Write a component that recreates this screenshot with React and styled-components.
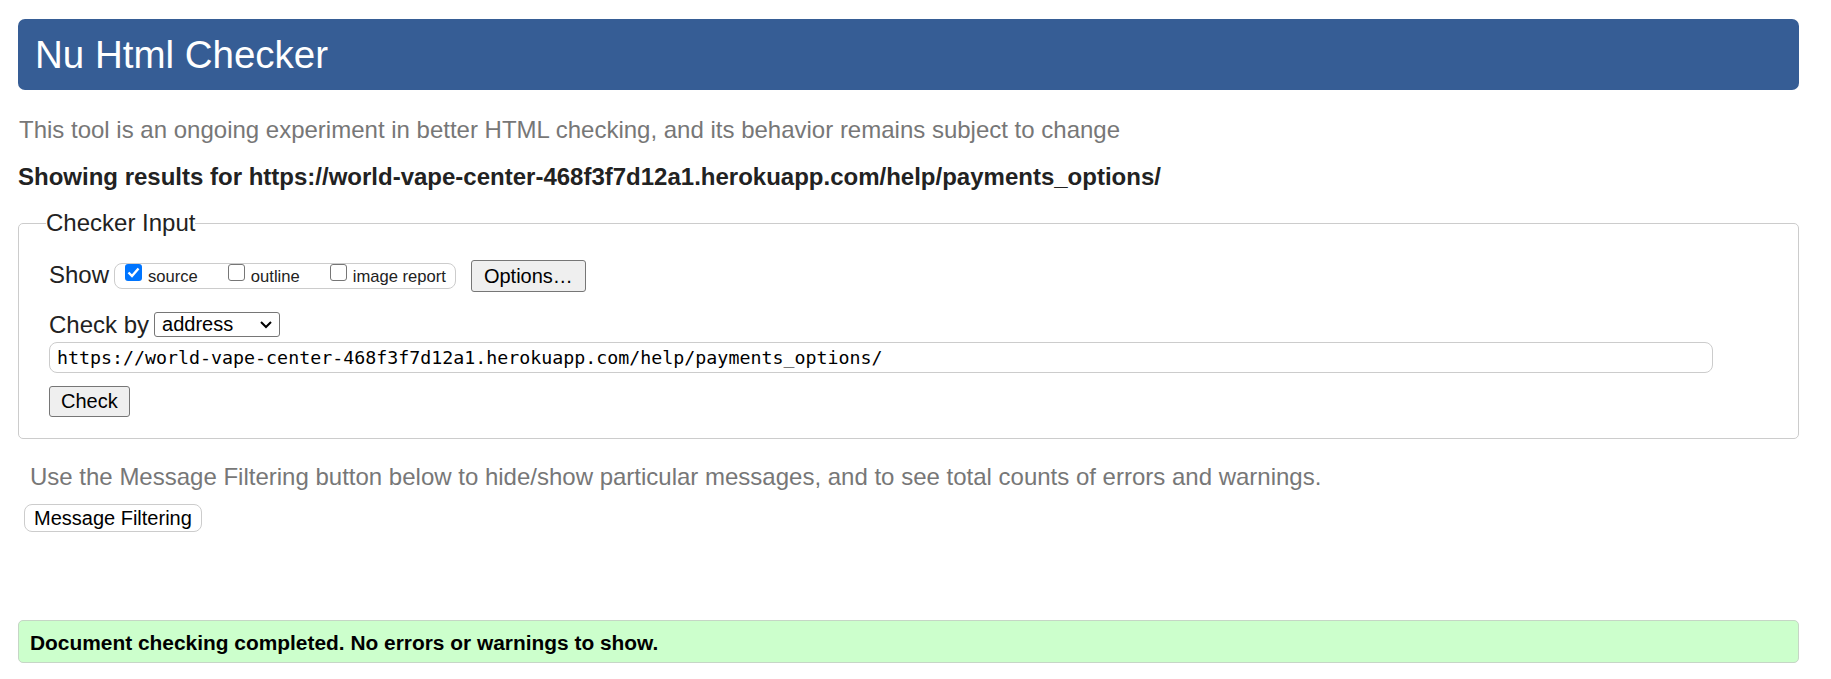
import React from 'react';
import styled, { createGlobalStyle } from 'styled-components';

const GlobalStyle = createGlobalStyle`
  body {
    margin: 0;
    background: #fff;
    font-family: "Liberation Sans", Arial, sans-serif;
    color: #222;
  }
`;

const Page = styled.div`
  padding: 19px 32px 16px 18px;
`;

const Header = styled.h1`
  margin: 0;
  height: 71px;
  line-height: 71px;
  padding-left: 17px;
  background: #365d95;
  color: #fff;
  font-size: 38.5px;
  font-weight: normal;
  border-radius: 7px;
`;

const Note = styled.p`
  margin: ${p => p.$top}px 0 0 ${p => p.$indent || 0}px;
  font-size: 24px;
  line-height: 26px;
  color: #777;
`;

const Results = styled.p`
  margin: 21px 0 0;
  font-size: 24px;
  line-height: 26px;
  font-weight: bold;
  color: #222;
`;

const Fieldset = styled.fieldset`
  margin: 20px 0 0;
  padding: 0 30px 21px 30px;
  border: 1px solid #ccc;
  border-radius: 5px;
`;

const Legend = styled.legend`
  margin-left: -3px;
  padding: 0;
  font-size: 24px;
  line-height: 26px;
  color: #222;
`;

const Row = styled.div`
  display: flex;
  align-items: center;
  margin-top: ${p => p.$top}px;
`;

const Label = styled.span`
  font-size: 24px;
  line-height: 27px;
  padding-bottom: ${p => p.$lift || 0}px;
  margin-right: 5px;
  color: #222;
`;

const Group = styled.div`
  display: flex;
  align-items: flex-start;
  height: 24px;
  padding: 0 9px 0 10px;
  border: 1px solid #ccc;
  border-radius: 8px;
`;

const Option = styled.label`
  display: flex;
  align-items: flex-start;
  margin-right: ${p => (p.$last ? 0 : 30)}px;
`;

const Box = styled.span`
  box-sizing: border-box;
  width: 17px;
  height: 17px;
  margin-right: 6px;
  border-radius: 3px;
  border: ${p => (p.$checked ? 'none' : '1px solid #767676')};
  background: ${p => (p.$checked ? '#0075ff' : '#fff')};
  display: flex;
  align-items: center;
  justify-content: center;
`;

const OptionText = styled.span`
  font-size: 16.6px;
  line-height: 24px;
  padding-top: 1px;
  color: #222;
`;

const Button = styled.button`
  box-sizing: border-box;
  height: ${p => p.$h || 31}px;
  padding: 0 ${p => p.$pad || 12}px;
  margin: ${p => p.$margin || 0};
  font-family: "Liberation Sans", Arial, sans-serif;
  font-size: 20px;
  color: #000;
  background: ${p => (p.$soft ? '#fff' : '#efefef')};
  border: 1px solid ${p => (p.$soft ? '#ccc' : '#767676')};
  border-radius: ${p => (p.$soft ? 8 : 3)}px;
`;

const Select = styled.div`
  box-sizing: border-box;
  width: 126px;
  height: 25px;
  display: flex;
  align-items: center;
  justify-content: space-between;
  padding: 0 7px;
  border: 1px solid #767676;
  border-radius: 3px;
  font-size: 20px;
  color: #000;
`;

const UrlField = styled.div`
  box-sizing: border-box;
  width: 1664px;
  height: 31px;
  margin-top: 4px;
  padding-left: 7px;
  display: flex;
  align-items: center;
  border: 1px solid #ccc;
  border-radius: 8px;
  font-family: "DejaVu Sans Mono", "Liberation Mono", monospace;
  font-size: 18.3px;
  color: #000;
`;

const Done = styled.div`
  box-sizing: border-box;
  height: 43px;
  margin-top: 88px;
  padding: 2px 0 0 11px;
  display: flex;
  align-items: center;
  background: #ccffcc;
  border: 1px solid #c6d6c6;
  border-radius: 5px;
  font-size: 20.9px;
  font-weight: bold;
  color: #000;
`;

const Check = () => (
  <svg width="13" height="11" viewBox="0 0 13 11">
    <polyline points="1.5,5.5 5,9 11.5,1.5" fill="none" stroke="#fff" strokeWidth="2.4" />
  </svg>
);

const Chevron = () => (
  <svg width="12" height="8" viewBox="0 0 12 8">
    <polyline points="1,1 6,6 11,1" fill="none" stroke="#000" strokeWidth="2" />
  </svg>
);

const URL = 'https://world-vape-center-468f3f7d12a1.herokuapp.com/help/payments_options/';

export default function App() {
  return (
    <Page>
      <GlobalStyle />
      <Header>Nu Html Checker</Header>
      <Note $top={27} $indent={1}>
        This tool is an ongoing experiment in better HTML checking, and its behavior remains subject to change
      </Note>
      <Results>Showing results for {URL}</Results>

      <Fieldset>
        <Legend>Checker Input</Legend>
        <Row $top={24}>
          <Label $lift={4}>Show</Label>
          <Group>
            <Option>
              <Box $checked><Check /></Box>
              <OptionText>source</OptionText>
            </Option>
            <Option>
              <Box />
              <OptionText>outline</OptionText>
            </Option>
            <Option $last>
              <Box />
              <OptionText>image report</OptionText>
            </Option>
          </Group>
          <Button $h={32} $margin="0 0 0 15px">Options…</Button>
        </Row>
        <Row $top={19}>
          <Label>Check by</Label>
          <Select>
            <span>address</span>
            <Chevron />
          </Select>
        </Row>
        <UrlField>{URL}</UrlField>
        <Row $top={13}>
          <Button $pad={11}>Check</Button>
        </Row>
      </Fieldset>

      <Note $top={25} $indent={12}>
        Use the Message Filtering button below to hide/show particular messages, and to see total counts of errors and warnings.
      </Note>
      <Row $top={14}>
        <Button $soft $h={28} $pad={9} $margin="0 0 0 6px">Message Filtering</Button>
      </Row>

      <Done>Document checking completed. No errors or warnings to show.</Done>
    </Page>
  );
}
